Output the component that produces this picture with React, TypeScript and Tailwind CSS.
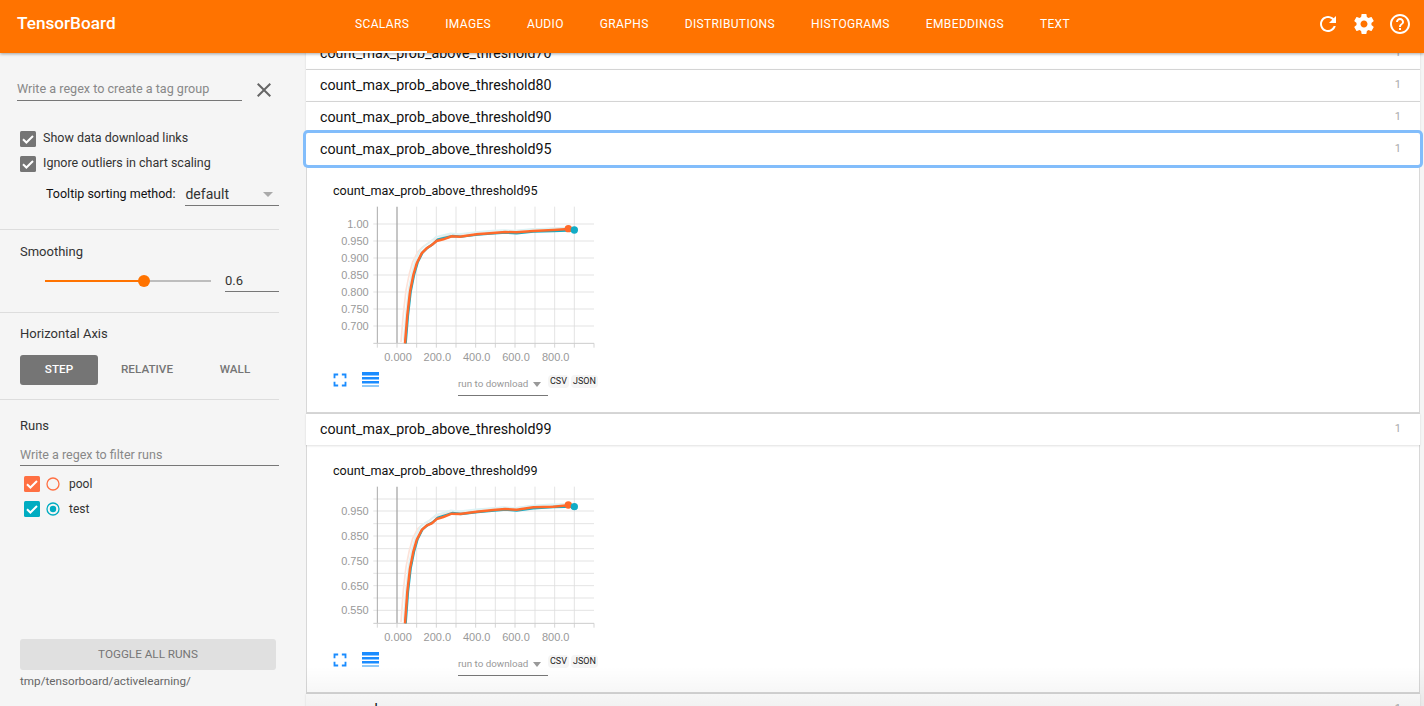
import React from 'react';

const tabs = ['SCALARS', 'IMAGES', 'AUDIO', 'GRAPHS', 'DISTRIBUTIONS', 'HISTOGRAMS', 'EMBEDDINGS', 'TEXT'];

const MI = ({ d, className }: { d: string; className: string }) => (
  <svg viewBox="0 0 24 24" className={className} fill="currentColor">
    <path d={d} />
  </svg>
);

const refreshPath = 'M17.65 6.35C16.2 4.9 14.21 4 12 4c-4.42 0-7.99 3.58-7.99 8s3.57 8 7.99 8c3.73 0 6.84-2.55 7.73-6h-2.08c-.82 2.33-3.04 4-5.65 4-3.31 0-6-2.69-6-6s2.69-6 6-6c1.66 0 3.14.69 4.22 1.78L13 11h7V4l-2.35 2.35z';
const settingsPath = 'M19.43 12.98c.04-.32.07-.64.07-.98s-.03-.66-.07-.98l2.11-1.65c.19-.15.24-.42.12-.64l-2-3.46c-.12-.22-.39-.3-.61-.22l-2.49 1c-.52-.4-1.08-.73-1.69-.98l-.38-2.65C14.46 2.18 14.25 2 14 2h-4c-.25 0-.46.18-.49.42l-.38 2.65c-.61.25-1.17.59-1.69.98l-2.49-1c-.23-.09-.49 0-.61.22l-2 3.46c-.13.22-.07.49.12.64l2.11 1.65c-.04.32-.07.65-.07.98s.03.66.07.98l-2.11 1.65c-.19.15-.24.42-.12.64l2 3.46c.12.22.39.3.61.22l2.49-1c.52.4 1.08.73 1.69.98l.38 2.65c.03.24.24.42.49.42h4c.25 0 .46-.18.49-.42l.38-2.65c.61-.25 1.17-.59 1.69-.98l2.49 1c.23.09.49 0 .61-.22l2-3.46c.12-.22.07-.49-.12-.64l-2.11-1.65zM12 15.5c-1.93 0-3.5-1.57-3.5-3.5s1.57-3.5 3.5-3.5 3.5 1.57 3.5 3.5-1.57 3.5-3.5 3.5z';
const helpPath = 'M11 18h2v-2h-2v2zm1-16C6.48 2 2 6.48 2 12s4.48 10 10 10 10-4.48 10-10S17.52 2 12 2zm0 18c-4.41 0-8-3.59-8-8s3.59-8 8-8 8 3.59 8 8-3.59 8-8 8zm0-14c-2.21 0-4 1.79-4 4h2c0-1.1.9-2 2-2s2 .9 2 2c0 2-3 1.75-3 5h2c0-2.25 3-2.5 3-5 0-2.21-1.79-4-4-4z';
const closePath = 'M19 6.41L17.59 5 12 10.59 6.41 5 5 6.41 10.59 12 5 17.59 6.41 19 12 13.41 17.59 19 19 17.59 13.41 12z';
const fullscreenPath = 'M7 14H5v5h5v-2H7v-3zm-2-4h2V7h3V5H5v5zm12 7h-3v2h5v-5h-2v3zM14 5v2h3v3h2V5h-5z';

function Check({ color }: { color: string }) {
  return (
    <svg viewBox="0 0 16 16" className="h-4 w-4 shrink-0">
      <rect width="16" height="16" rx="1.5" fill={color} />
      <path d="M3 8.2l3.4 3.3L13 5" stroke="#fff" strokeWidth="2" fill="none" />
    </svg>
  );
}

function RunRow({ name, color, selected }: { name: string; color: string; selected?: boolean }) {
  return (
    <div className="flex h-[25px] items-center pl-1">
      <Check color={color} />
      <svg viewBox="0 0 14 14" className="ml-[6px] h-[14px] w-[14px]">
        <circle cx="7" cy="7" r="6" fill="none" stroke={color} strokeWidth="1.3" />
        {selected && <circle cx="7" cy="7" r="3.2" fill={color} />}
      </svg>
      <span className="ml-[9px] text-[12px] text-[#333]">{name}</span>
    </div>
  );
}

// plot drawn in a 3x coordinate space (1 unit = 1/3 px)
function Chart({ yTicks, minor, line, teal, dotOrange, dotTeal }: {
  yTicks: { y: number; label: string }[];
  minor: number[];
  line: string;
  teal: string;
  dotOrange: number;
  dotTeal: number;
}) {
  const xGrid = [290, 349, 408, 467, 526, 585, 645, 704, 763];
  const xLabels = [['0.000', 231], ['200.0', 349], ['400.0', 467], ['600.0', 585], ['800.0', 704]] as const;
  return (
    <svg viewBox="0 75 870 495" className="h-[165px] w-[290px]" style={{ fontFamily: '"Liberation Sans", sans-serif' }}>
      {xGrid.map((x) => (
        <line key={x} x1={x} x2={x} y1="95" y2="505" stroke="#ddd" strokeWidth="2.5" />
      ))}
      {minor.concat(yTicks.map((t) => t.y)).map((y) => (
        <line key={y} x1="160" x2="822" y1={y} y2={y} stroke="#ddd" strokeWidth="2.5" />
      ))}
      <line x1="172" x2="172" y1="95" y2="505" stroke="#aaa" strokeWidth="3" />
      <line x1="231" x2="231" y1="95" y2="505" stroke="#aaa" strokeWidth="4" />
      <line x1="160" x2="822" y1="505" y2="505" stroke="#ccc" strokeWidth="3" />
      {[172, 231, 290, 349, 408, 467, 526, 585, 645, 704, 763, 822].map((x) => (
        <line key={x} x1={x} x2={x} y1="505" y2="518" stroke="#ccc" strokeWidth="2.5" />
      ))}
      {yTicks.map((t) => (
        <text key={t.label} x="146" y={t.y + 12} textAnchor="end" fontSize="33" fill="#999">{t.label}</text>
      ))}
      {xLabels.map(([label, x]) => (
        <text key={label} x={x + 3} y="558" textAnchor="middle" fontSize="33" fill="#999">{label}</text>
      ))}
      <polyline points={line} transform="translate(-12 -4)" fill="none" stroke="#fde3d9" strokeWidth="5" />
      <polyline points={teal} transform="translate(-6 -8)" fill="none" stroke="#dcf3f6" strokeWidth="5" />
      <polyline points={teal} fill="none" stroke="#12acc6" strokeWidth="7" />
      <polyline points={line} fill="none" stroke="#ff6a2b" strokeWidth="7.5" />
      <circle cx="745" cy={dotOrange} r="11" fill="#ff6a2b" />
      <circle cx="763" cy={dotTeal} r="11" fill="#12acc6" />
    </svg>
  );
}

function ChartCard({ name, children }: { name: string; children: React.ReactNode }) {
  return (
    <div className="h-[248px] border-x border-b border-[#d8d8d8] bg-white pl-[13px]">
      <div className="pl-[13px] pt-[17px] text-[12.6px] leading-[17px] text-[#111]">{name}</div>
      <div className="mt-px">{children}</div>
      <div className="mt-[4px] flex items-start">
        <MI d={fullscreenPath} className="ml-[9px] h-[22px] w-[22px] text-[#1a8cff]" />
        <svg viewBox="0 0 17 16" className="ml-[11px] mt-[3px] h-[16px] w-[17px]">
          <rect y="0" width="17" height="3.5" fill="#1a8cff" />
          <rect y="5" width="17" height="2.5" fill="#1a8cff" />
          <rect y="9" width="17" height="2.5" fill="#1a8cff" />
          <rect y="13" width="17" height="2" fill="#90caf9" />
        </svg>
        <div className="ml-[79px] mt-[4px] flex h-[23px] w-[90px] items-center justify-between border-b border-[#777] pr-[7px] text-[9.8px] text-[#999]">
          <span>run to download</span>
          <span className="h-0 w-0 border-x-[4.5px] border-t-[5px] border-x-transparent border-t-[#999]" />
        </div>
        <div className="mt-[6px] flex gap-[2px] text-[9px] leading-[13px] text-[#222]">
          <span className="rounded-sm bg-[#f5f5f5] px-[2px]">CSV</span>
          <span className="rounded-sm bg-[#f5f5f5] px-[2px]">JSON</span>
        </div>
      </div>
    </div>
  );
}

function TagRow({ name, focused }: { name: string; focused?: boolean }) {
  return (
    <div
      className={`relative flex h-[32px] items-center justify-between border-t bg-white pl-[14px] pr-[19px] text-[14.25px] text-[#111] ${
        focused ? 'z-[1] rounded-[2px] border-transparent ring-[3px] ring-[#82bdfb]' : 'border-[#d4d4d4] shadow-[0_1px_2px_rgba(0,0,0,0.12)]'
      }`}
    >
      <span>{name}</span>
      <span className="text-[11px] text-[#aaa]">1</span>
    </div>
  );
}

const line95 = '255,505 262,420 270,350 280,300 290,265 305,235 320,220 335,210 350,198 370,193 395,184 420,185 470,178 520,174 555,171 590,172 640,168 700,165 745,162';
const teal95 = '257,505 264,420 272,350 282,300 293,262 308,232 323,218 338,208 353,194 373,189 398,183 423,185 473,179 523,175 558,173 590,175 640,170 700,168 763,166';
const line99 = '255,505 262,410 270,340 280,290 290,255 305,225 320,212 335,205 350,192 370,186 395,176 420,177 470,170 520,165 555,162 590,164 640,157 700,155 745,151';
const teal99 = '257,505 264,410 272,340 282,290 293,252 308,222 323,210 338,202 353,188 373,182 398,174 423,177 473,171 523,167 558,164 590,167 640,160 700,156 763,155';

export default function App() {
  return (
    <div className="flex h-screen flex-col overflow-hidden bg-[#f5f5f5] font-['Roboto',sans-serif]">
      <header className="relative z-10 flex h-[53px] shrink-0 items-center bg-[#ff7300] pl-[17px] pr-[12px] text-white shadow-[0_1px_3px_rgba(0,0,0,0.35)]">
        <div className="w-[320px] pb-[5px] text-[17.2px] font-medium">TensorBoard</div>
        <nav className="flex h-full">
          {tabs.map((t, i) => (
            <div key={t} className="relative flex h-full items-center px-[18px] pb-[5px] text-[12px] font-normal tracking-[0.36px]">
              {t}
              {i === 0 && <div className="absolute bottom-0 left-0 right-0 h-[2px] bg-white" />}
            </div>
          ))}
        </nav>
        <div className="ml-auto flex gap-[12px] pb-[5px]">
          <MI d={refreshPath} className="h-6 w-6" />
          <MI d={settingsPath} className="h-6 w-6" />
          <MI d={helpPath} className="h-6 w-6" />
        </div>
      </header>

      <div className="flex min-h-0 flex-1">
        <aside className="flex w-[303px] shrink-0 flex-col bg-[#f5f5f5] pr-[24px] text-[12.5px] text-[#333]">
          <div className="h-[177px] border-b border-[#ddd]">
            <div className="ml-[17px] mt-[25px] flex items-center">
              <div className="h-[22px] w-[225px] border-b border-[#777] text-[12.6px] leading-[20px] text-[#888]">Write a regex to create a tag group</div>
              <MI d={closePath} className="ml-[10px] h-6 w-6 text-[#666]" />
            </div>
            <div className="ml-[20px] mt-[24px] flex flex-col">
              <div className="flex h-[25px] items-center gap-[7px]">
                <Check color="#757575" />
                <span>Show data download links</span>
              </div>
              <div className="flex h-[25px] items-center gap-[7px]">
                <Check color="#757575" />
                <span>Ignore outliers in chart scaling</span>
              </div>
            </div>
            <div className="ml-[46px] mt-[7px] flex items-center whitespace-nowrap text-[#111]">
              <span>Tooltip sorting method:</span>
              <div className="ml-[10px] flex h-[23px] w-[94px] items-center justify-between border-b border-[#777] pr-[6px] text-[14px] text-[#333]">
                default
                <span className="h-0 w-0 border-x-[5px] border-t-[5px] border-x-transparent border-t-[#aaa]" />
              </div>
            </div>
          </div>

          <div className="h-[83px] border-b border-[#ddd]">
            <div className="ml-[20px] mt-[14px] text-[13px] leading-[16px]">Smoothing</div>
            <div className="mt-[10px] flex items-center pl-[45px]">
              <div className="relative h-[2px] w-[166px] bg-[#bdbdbd]">
                <div className="h-full w-[99px] bg-[#ff7300]" />
                <div className="absolute left-[93px] top-[-5px] h-[12px] w-[12px] rounded-full bg-[#ff7300]" />
              </div>
              <div className="ml-[14px] h-[22px] w-[54px] border-b border-[#777] text-[13px] leading-[22px]">0.6</div>
            </div>
          </div>

          <div className="h-[87px] border-b border-[#ddd]">
            <div className="ml-[20px] mt-[13px] text-[13px] leading-[16px]">Horizontal Axis</div>
            <div className="ml-[20px] mt-[13px] flex text-[11.7px] font-medium text-[#757575]">
              <div className="flex h-[30px] w-[78px] items-center justify-center rounded-[3px] bg-[#757575] text-white">STEP</div>
              <div className="flex h-[30px] w-[98px] items-center justify-center">RELATIVE</div>
              <div className="flex h-[30px] w-[78px] items-center justify-center">WALL</div>
            </div>
          </div>

          <div className="ml-[20px] mt-[17px] text-[13px] leading-[18px]">Runs</div>
          <div className="ml-[20px] mt-[11px] h-[20px] border-b border-[#777] leading-[18px] text-[#888]">Write a regex to filter runs</div>
          <div className="ml-[20px] mt-[5px]">
            <RunRow name="pool" color="#ff7043" />
            <RunRow name="test" color="#00acc1" selected />
          </div>

          <div className="mt-auto ml-[20px] mr-[3px] flex h-[31px] items-center justify-center rounded-[3px] bg-[#e0e0e0] text-[11.7px] text-[#757575]">TOGGLE ALL RUNS</div>
          <div className="ml-[20px] mb-[16px] mt-[2px] text-[11.7px] leading-[18px] text-[#666]">tmp/tensorboard/activelearning/</div>
        </aside>

        <main className="relative min-w-0 flex-1 overflow-hidden pl-[3px] pr-[4px]">
          <div className="mt-[-16px]">
            <TagRow name="count_max_prob_above_threshold70" />
            <TagRow name="count_max_prob_above_threshold80" />
            <TagRow name="count_max_prob_above_threshold90" />
            <TagRow name="count_max_prob_above_threshold95" focused />
            <ChartCard name="count_max_prob_above_threshold95">
              <Chart
                yTicks={[{ y: 147, label: '1.00' }, { y: 198, label: '0.950' }, { y: 249, label: '0.900' }, { y: 300, label: '0.850' }, { y: 351, label: '0.800' }, { y: 402, label: '0.750' }, { y: 453, label: '0.700' }]}
                minor={[]}
                line={line95}
                teal={teal95}
                dotOrange={161}
                dotTeal={165}
              />
            </ChartCard>
            <TagRow name="count_max_prob_above_threshold99" />
            <ChartCard name="count_max_prob_above_threshold99">
              <Chart
                yTicks={[{ y: 168, label: '0.950' }, { y: 243, label: '0.850' }, { y: 318, label: '0.750' }, { y: 392, label: '0.650' }, { y: 466, label: '0.550' }]}
                minor={[132, 206, 281, 355, 429]}
                line={line99}
                teal={teal99}
                dotOrange={150}
                dotTeal={155}
              />
            </ChartCard>
            <TagRow name="max_prob" />
          </div>
          {/* bottom fade over the list */}
          <div className="pointer-events-none absolute bottom-0 left-[3px] right-0 z-[2] h-[40px] bg-gradient-to-b from-transparent to-[rgba(0,0,0,0.05)]" />
        </main>
      </div>
    </div>
  );
}
